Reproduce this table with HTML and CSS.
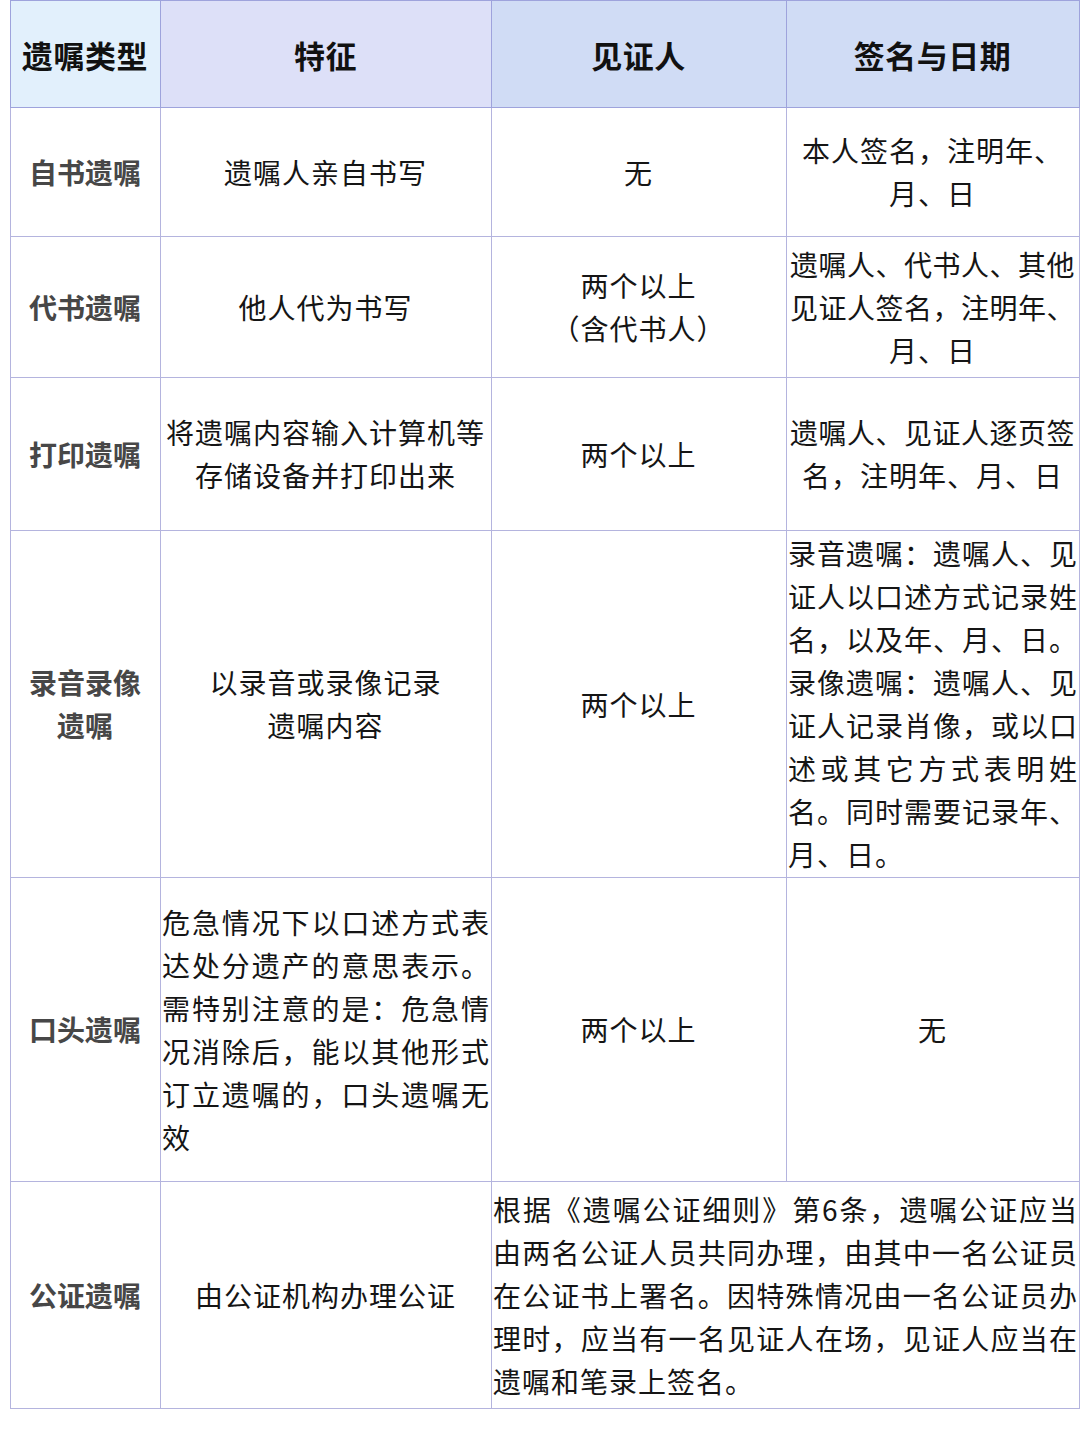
FILE: index.html
```html
<!DOCTYPE html>
<html lang="zh-CN">
<head>
<meta charset="utf-8">
<title>遗嘱类型</title>
<link rel="stylesheet" href="styles.css">
</head>
<body>
<table class="wills">
  <colgroup>
    <col class="c1"><col class="c2"><col class="c3"><col class="c4">
  </colgroup>
  <thead>
    <tr class="head">
      <th class="h1">遗嘱类型</th>
      <th class="h2">特征</th>
      <th class="h3">见证人</th>
      <th class="h4">签名与日期</th>
    </tr>
  </thead>
  <tbody>
    <tr class="r1">
      <td class="type">自书遗嘱</td>
      <td class="ctr">遗嘱人亲自书写</td>
      <td class="ctr">无</td>
      <td class="ctr"><div>本人签名，注明年、</div><div>月、日</div></td>
    </tr>
    <tr class="r2">
      <td class="type">代书遗嘱</td>
      <td class="ctr">他人代为书写</td>
      <td class="ctr"><div>两个以上</div><div>（含代书人）</div></td>
      <td class="ctr"><div class="full">遗嘱人、代书人、其他</div><div class="full">见证人签名，注明年、</div><div>月、日</div></td>
    </tr>
    <tr class="r3">
      <td class="type">打印遗嘱</td>
      <td class="ctr"><div>将遗嘱内容输入计算机等</div><div>存储设备并打印出来</div></td>
      <td class="ctr">两个以上</td>
      <td class="ctr"><div class="full">遗嘱人、见证人逐页签</div><div>名，注明年、月、日</div></td>
    </tr>
    <tr class="r4">
      <td class="type"><div>录音录像</div><div>遗嘱</div></td>
      <td class="ctr"><div>以录音或录像记录</div><div>遗嘱内容</div></td>
      <td class="ctr">两个以上</td>
      <td class="jst">
        <div class="full">录音遗嘱：遗嘱人、见</div>
        <div class="full">证人以口述方式记录姓</div>
        <div class="full">名，以及年、月、日。</div>
        <div class="full">录像遗嘱：遗嘱人、见</div>
        <div class="full">证人记录肖像，或以口</div>
        <div class="full">述或其它方式表明姓</div>
        <div class="full">名。同时需要记录年、</div>
        <div>月、日。</div>
      </td>
    </tr>
    <tr class="r5">
      <td class="type">口头遗嘱</td>
      <td class="jst">
        <div class="full">危急情况下以口述方式表</div>
        <div class="full">达处分遗产的意思表示。</div>
        <div class="full">需特别注意的是：危急情</div>
        <div class="full">况消除后，能以其他形式</div>
        <div class="full">订立遗嘱的，口头遗嘱无</div>
        <div>效</div>
      </td>
      <td class="ctr">两个以上</td>
      <td class="ctr">无</td>
    </tr>
    <tr class="r6">
      <td class="type">公证遗嘱</td>
      <td class="ctr">由公证机构办理公证</td>
      <td class="jst" colspan="2">
        <div class="full">根据《遗嘱公证细则》第6条，遗嘱公证应当</div>
        <div class="full">由两名公证人员共同办理，由其中一名公证员</div>
        <div class="full">在公证书上署名。因特殊情况由一名公证员办</div>
        <div class="full">理时，应当有一名见证人在场，见证人应当在</div>
        <div>遗嘱和笔录上签名。</div>
      </td>
    </tr>
  </tbody>
</table>
</body>
</html>
```

FILE: styles.css
```css
html, body {
  margin: 0;
  padding: 0;
  background: #ffffff;
}

body {
  font-family: "Noto Sans CJK SC", "Noto Sans", sans-serif;
  color: #151515;
}

.wills {
  margin-left: 10px;
  border-collapse: collapse;
  table-layout: fixed;
  width: 1069px;
}

.c1 { width: 150px; }
.c2 { width: 331px; }
.c3 { width: 295px; }
.c4 { width: 293px; }

.wills th,
.wills td {
  border: 1px solid #b4b4de;
  padding: 0 2px 0 1px;
  vertical-align: middle;
  box-sizing: border-box;
}

.head { height: 107px; }

.head th {
  font-size: 31px;
  font-weight: 700;
  color: #111111;
  text-align: center;
  border-color: #9ea3dc;
  letter-spacing: 0.5px;
}

.h1 { background: #e2f0fc; }
.h2 { background: #dde0f8; }
.h3 { background: #d0dcf5; }
.h4 { background: #d0dcf5; }

.r1 { height: 129px; }
.r2 { height: 141px; }
.r3 { height: 153px; }
.r4 { height: 347px; }
.r5 { height: 304px; }
.r6 { height: 227px; }

.wills td {
  font-size: 28px;
  line-height: 43px;
  letter-spacing: 1px;
}

.wills td.type {
  font-weight: 700;
  color: #474747;
  text-align: center;
  letter-spacing: 0;
}

.ctr {
  text-align: center;
}

.jst {
  text-align: left;
}

.jst .full {
  text-align: justify;
  text-align-last: justify;
  letter-spacing: 0;
}

.ctr .full {
  letter-spacing: 0.5px;
}
```
